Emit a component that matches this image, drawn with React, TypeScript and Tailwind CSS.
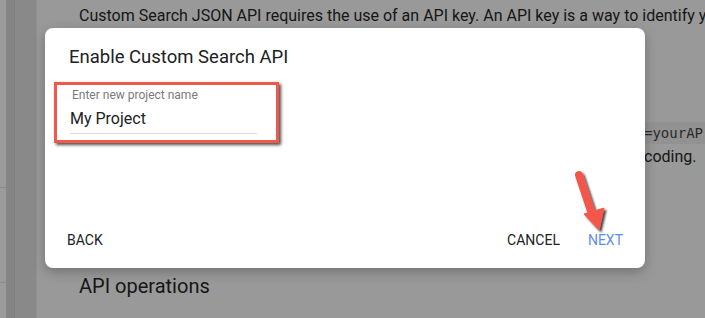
export default function App() {
  return (
    <div className="relative w-[705px] h-[318px] overflow-hidden bg-[#999999] flex font-['Roboto',sans-serif]">
      {/* left rail */}
      <div className="w-[6px] shrink-0 flex flex-col bg-[#9b9b9b]">
        <div className="h-[187px]" />
        <div className="h-[96px] border-t border-b border-[#8c8c8c]" />
      </div>
      <div className="w-[9px] shrink-0 bg-[#858585] border-r border-[#7f7f7f]" />
      <div className="w-[21px] shrink-0 bg-[#898989]" />
      <div className="w-px shrink-0 bg-[#8f8f8f]" />

      {/* page behind the overlay */}
      <div className="flex-1 min-w-0 overflow-hidden pl-[42px] pt-[4px] text-[#151515] whitespace-nowrap">
        <p className="text-[16px] leading-6">
          Custom Search JSON API requires the use of an API key. An API key is a way to identify y
        </p>
        <div className="mt-[94px] h-[22px] bg-[#929292] flex items-center">
          <span className="inline-block w-[565px] shrink-0" />
          <span className="font-['DejaVu_Sans_Mono',monospace] text-[14px] text-[#2a2a2a]">=yourAP</span>
        </div>
        <p className="text-[16px] leading-6 mt-px flex">
          <span className="inline-block w-[565px] shrink-0" />
          coding.
        </p>
        <h2 className="mt-[103px] text-[20px] leading-7">API operations</h2>
      </div>

      {/* dialog */}
      <div className="absolute left-[45px] top-[28px] w-[600px] h-[240px] bg-white rounded-lg shadow-[0_4px_12px_rgba(0,0,0,0.25)] flex flex-col">
        <h1 className="pl-6 pt-[17px] text-[18.5px] leading-6 text-[#202124]">Enable Custom Search API</h1>
        <div className="ml-[9px] mt-[13px] w-[225px] h-[61px] border-[3px] border-[#f2584a] shadow-[2px_2px_3px_rgba(0,0,0,0.7)] flex flex-col">
          <span className="pl-[15px] mt-[2px] text-[12px] leading-4 text-[#7a7a7a]">Enter new project name</span>
          <div className="ml-[13px] mt-[4px] w-[187px] border-b border-[#dadce0] pb-[2px] text-[16px] leading-6 text-[#202124]">
            My Project
          </div>
        </div>
        <div className="flex-1" />
        <div className="flex items-center justify-between px-[22px] h-9 mb-[10px] text-[14px] text-[#202124]">
          <span>BACK</span>
          <div className="flex gap-[28px]">
            <span>CANCEL</span>
            <span className="text-[#5b8ef0]">NEXT</span>
          </div>
        </div>
      </div>

      {/* annotation arrow */}
      <svg className="absolute left-0 top-0" width="705" height="318" viewBox="0 0 705 318">
        <defs>
          <filter id="sh" x="-50%" y="-50%" width="200%" height="200%">
            <feDropShadow dx="2" dy="2" stdDeviation="1.2" floodColor="#000" floodOpacity="0.75" />
          </filter>
        </defs>
        <g filter="url(#sh)" fill="#f4574a" stroke="#f4574a">
          <line x1="579" y1="175" x2="592" y2="214" strokeWidth="8" strokeLinecap="round" />
          <polygon points="584,214 604,208 599,230" strokeWidth="1" strokeLinejoin="round" />
        </g>
      </svg>
    </div>
  );
}
